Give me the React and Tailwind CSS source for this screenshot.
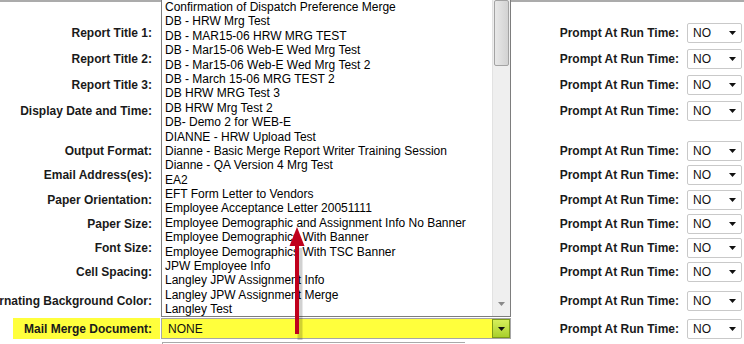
import React from "react";

const ITEMS = [
    "Confirmation of Dispatch Preference Merge",
    "DB - HRW Mrg Test",
    "DB - MAR15-06 HRW MRG TEST",
    "DB - Mar15-06 Web-E Wed Mrg Test",
    "DB - Mar15-06 Web-E Wed Mrg Test 2",
    "DB - March 15-06 MRG TEST 2",
    "DB HRW MRG Test 3",
    "DB HRW Mrg Test 2",
    "DB- Demo 2 for WEB-E",
    "DIANNE - HRW Upload Test",
    "Dianne - Basic Merge Report Writer Training Session",
    "Dianne - QA Version 4 Mrg Test",
    "EA2",
    "EFT Form Letter to Vendors",
    "Employee Acceptance Letter 20051111",
    "Employee Demographic and Assignment Info No Banner",
    "Employee Demographics With Banner",
    "Employee Demographics With TSC Banner",
    "JPW Employee Info",
    "Langley JPW Assignment Info",
    "Langley JPW Assignment Merge",
    "Langley Test",
];

// label + row height class (written out in full)
const ROWS = [
    { label: "Report Title 1:", h: "h-[26px]" },
    { label: "Report Title 2:", h: "h-[26px]" },
    { label: "Report Title 3:", h: "h-[26px]" },
    { label: "Display Date and Time:", h: "h-[26px]", gapAfter: true },
    { label: "Output Format:", h: "h-[24px]" },
    { label: "Email Address(es):", h: "h-[24px]" },
    { label: "Paper Orientation:", h: "h-[25px]" },
    { label: "Paper Size:", h: "h-[24px]" },
    { label: "Font Size:", h: "h-[24px]" },
    { label: "Cell Spacing:", h: "h-[24px]" },
    { label: "Alternating Background Color:", h: "h-[33px]" },
];

const Caret = () => (
    <svg width="7" height="4" viewBox="0 0 7 4" className="shrink-0">
        <path d="M0 0 L7 0 L3.5 4 Z" fill="#111" />
    </svg>
);

const NoSelect = () => (
    <div className="w-[55px] h-[20px] border border-[#c9c9c9] rounded-[2px] bg-white flex items-center justify-between pl-[5px] pr-[5px]">
        <span className="text-[12px] text-[#111]">NO</span>
        <Caret />
    </div>
);

const Prompt = () => (
    <div className="flex-1 flex justify-end items-center pr-[2px]">
        <span className="font-bold text-[#1a1a1a] whitespace-nowrap">Prompt At Run Time:</span>
        <div className="ml-[8px]">
            <NoSelect />
        </div>
    </div>
);

export default function App() {
    return (
        <div className="relative w-[744px] h-[344px] overflow-hidden bg-white text-[12px] font-['Liberation_Sans',Arial,sans-serif] text-black">
            {/* top edge of the form */}
            <div className="h-[2px] bg-[#ababab]" />

            <div className="pt-[18px]">
                {ROWS.map((r) => (
                    <div key={r.label} className={`flex items-center ${r.h} ${r.gapAfter ? "mb-[15px]" : ""}`}>
                        <div className="w-[161px] shrink-0 flex justify-end pr-[9px] whitespace-nowrap font-bold text-[#1a1a1a]">
                            {r.label}
                        </div>
                        <div className="w-[350px] shrink-0" />
                        <Prompt />
                    </div>
                ))}

                {/* Mail merge row */}
                <div className="flex items-stretch h-[21px] mt-[1px]">
                    <div className="w-[161px] shrink-0 pl-[13px] pr-[1px]">
                        <div className="h-full bg-[#ffff3c] flex justify-end items-center pr-[8px] whitespace-nowrap font-bold text-[#1a1a1a]">
                            Mail Merge Document:
                        </div>
                    </div>
                    <div className="w-[350px] shrink-0 flex bg-[#ffff3c] border border-[#a6a6a6]">
                        <span className="flex-1 flex items-center pl-[6px] text-[#111]">NONE</span>
                        <div className="w-[18px] flex items-center justify-center bg-gradient-to-b from-[#d6ef5a] to-[#a9d02a] border border-[#7c9a18]">
                            <Caret />
                        </div>
                    </div>
                    <div className="flex-1 flex items-center">
                        <Prompt />
                    </div>
                </div>

                {/* next field, cut off */}
                <div className="flex mt-[3px]">
                    <div className="w-[162px] shrink-0" />
                    <div className="w-[303px] h-[10px] border-t border-l border-[#a9a9a9]" />
                </div>
            </div>

            {/* open listbox */}
            <div className="absolute left-[161px] top-0 w-[350px] h-[317px] z-10 flex bg-white border-l border-r border-b border-[#7d7d7d]">
                <div className="flex-1 overflow-hidden pl-[3px]">
                    {ITEMS.map((t) => (
                        <div key={t} className="h-[14.4px] leading-[14.4px] whitespace-nowrap">
                            {t}
                        </div>
                    ))}
                </div>
                <div className="w-[18px] flex flex-col bg-[#efefef] border-l border-[#e2e2e2]">
                    <div className="h-[66px] mx-[1px] bg-gradient-to-r from-[#e8e8e8] to-[#d2d2d2] border border-[#a3a3a3] rounded-[2px]" />
                    <div className="flex-1" />
                    <div className="h-[16px] flex items-start justify-center pt-[2px]">
                        <svg width="7" height="4" viewBox="0 0 7 4">
                            <path d="M0 0 L7 0 L3.5 4 Z" fill="#8a8a8a" />
                        </svg>
                    </div>
                </div>
            </div>

            {/* red annotation arrow */}
            <svg className="absolute left-[286px] top-[224px] z-20" width="24" height="120" viewBox="0 0 24 120">
                <line x1="14" y1="24" x2="14" y2="116" stroke="#000" strokeOpacity="0.18" strokeWidth="5" />
                <line x1="11" y1="18" x2="11" y2="110" stroke="#c0001c" strokeWidth="4" />
                <path d="M11 3 L3.5 22 L18.5 22 Z" fill="#c0001c" />
            </svg>
        </div>
    );
}
